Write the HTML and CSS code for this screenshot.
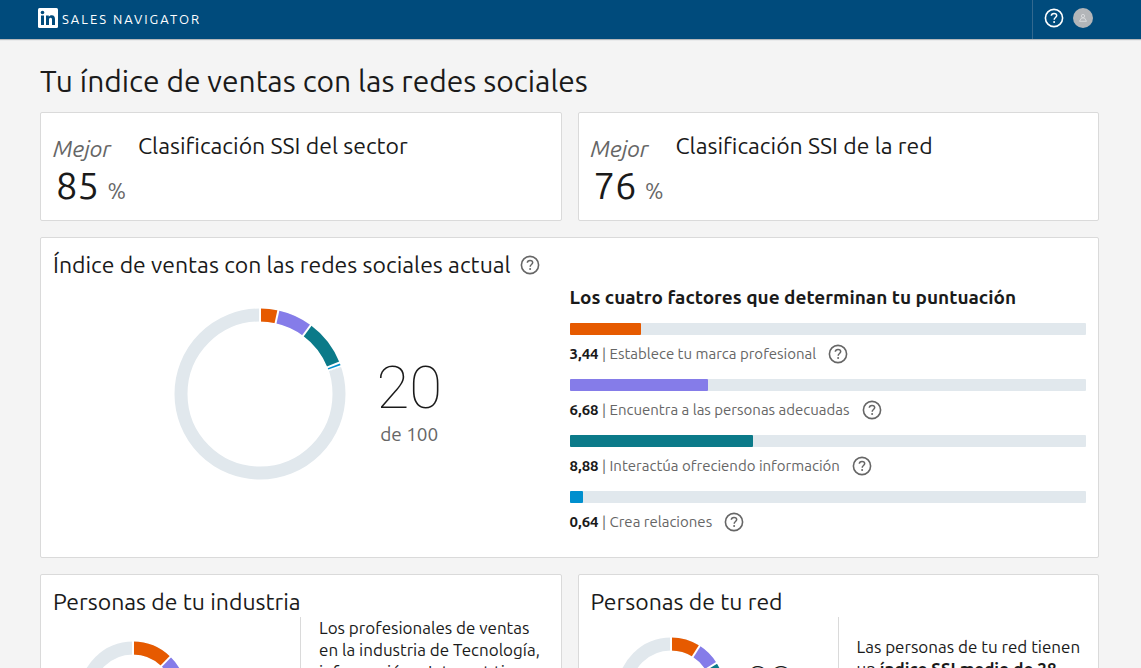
FILE: index.html
```
<!DOCTYPE html>
<html lang="es">
<head>
<meta charset="utf-8">
<meta name="viewport" content="width=device-width, initial-scale=1">
<title>Sales Navigator</title>
<link rel="stylesheet" href="styles.css">
</head>
<body>
<svg class="sprite" aria-hidden="true">
  <symbol id="help" viewBox="0 0 20 20">
    <circle cx="10" cy="10" r="8.600" fill="none" stroke="currentColor" stroke-width="1.600"/>
    <path d="M7.300 7.700C7.400 6.200 8.500 5.400 10 5.400s2.700.9 2.700 2.200c0 1.900-2.500 1.900-2.500 4.100" fill="none" stroke="currentColor" stroke-width="1.500"/>
    <circle cx="10.100" cy="14.100" r="1" fill="currentColor"/>
  </symbol>
</svg>
<header class="topbar">
  <a class="brand" href="#" aria-label="LinkedIn Sales Navigator">
    <svg class="brand-logo" viewBox="0 0 20 20" aria-hidden="true">
      <rect width="20" height="20" rx="1.500" fill="#fff"/>
      <circle cx="4.500" cy="4.500" r="1.800" fill="#004b7c"/>
      <path d="M3 7.500h3V17H3zM8 7.500h2.800v1.300c.5-.9 1.500-1.550 2.900-1.550 2.700 0 3.300 1.800 3.300 4.250V17h-3v-4.900c0-1.200-.1-2.300-1.450-2.300S11 10.900 11 12.100V17H8z" fill="#004b7c"/>
    </svg>
    <span class="brand-name">SALES NAVIGATOR</span>
  </a>
  <div class="tools">
    <button class="tool" type="button" aria-label="Ayuda"><svg class="icon"><use href="#help"/></svg></button>
    <button class="tool" type="button" aria-label="Cuenta">
      <svg class="icon" viewBox="0 0 20 20">
        <circle cx="10" cy="10" r="10" fill="#b3b6b9"/>
        <circle cx="10" cy="8" r="1.600" fill="none" stroke="#d9dbdd"/>
        <path d="M8.500 10h3l2 3.300h-7z" fill="none" stroke="#d9dbdd"/>
      </svg>
    </button>
  </div>
</header>
<main class="page">
  <h1 class="page-title">Tu índice de ventas con las redes sociales</h1>
  <div class="grid">
    <section class="card rank">
      <div class="rank-score">
        <p class="rank-label">Mejor</p>
        <p class="rank-value">85 <span class="rank-unit">%</span></p>
      </div>
      <h2 class="card-title">Clasificación SSI del sector</h2>
    </section>
    <section class="card rank">
      <div class="rank-score">
        <p class="rank-label">Mejor</p>
        <p class="rank-value">76 <span class="rank-unit">%</span></p>
      </div>
      <h2 class="card-title">Clasificación SSI de la red</h2>
    </section>

    <section class="card current">
      <div class="summary">
        <div class="title-row">
          <h2 class="card-title">Índice de ventas con las redes sociales actual</h2>
          <button class="tool" type="button" aria-label="Más información"><svg class="icon"><use href="#help"/></svg></button>
        </div>
        <div class="score">
          <svg class="donut" viewBox="-86 -86 172 172" role="img" aria-label="20 de 100">
            <g class="ring" transform="rotate(-90)">
              <circle class="track" r="79"/>
              <circle class="brand-color" r="79" pathLength="100" stroke-dasharray="3.440 100"/>
              <circle class="people-color" r="79" pathLength="100" stroke-dasharray="6.680 100" stroke-dashoffset="-3.440"/>
              <circle class="insight-color" r="79" pathLength="100" stroke-dasharray="8.880 100" stroke-dashoffset="-10.120"/>
              <circle class="relation-color" r="79" pathLength="100" stroke-dasharray="0.800 100" stroke-dashoffset="-19"/>
            </g>
            <g class="gaps">
              <path d="M0-71V-87"/>
              <path d="M0-71V-87" transform="rotate(12.400)"/>
              <path d="M0-71V-87" transform="rotate(36.400)"/>
              <path d="M0-71V-87" transform="rotate(68.400)"/>
              <path d="M0-71V-87" transform="rotate(71)"/>
            </g>
          </svg>
          <div class="score-text">
            <p class="score-value">20</p>
            <p class="score-total">de 100</p>
          </div>
        </div>
      </div>
      <div class="factors">
        <h3 class="factors-title">Los cuatro factores que determinan tu puntuación</h3>
        <ul class="factor-list">
          <li>
            <div class="bar"><div class="fill brand-fill" style="width:13.76%"></div></div>
            <div class="factor"><p><b>3,44</b> | Establece tu marca profesional</p><button class="tool" type="button" aria-label="Más información"><svg class="icon"><use href="#help"/></svg></button></div>
          </li>
          <li>
            <div class="bar"><div class="fill people-fill" style="width:26.72%"></div></div>
            <div class="factor"><p><b>6,68</b> | Encuentra a las personas adecuadas</p><button class="tool" type="button" aria-label="Más información"><svg class="icon"><use href="#help"/></svg></button></div>
          </li>
          <li>
            <div class="bar"><div class="fill insight-fill" style="width:35.52%"></div></div>
            <div class="factor"><p><b>8,88</b> | Interactúa ofreciendo información</p><button class="tool" type="button" aria-label="Más información"><svg class="icon"><use href="#help"/></svg></button></div>
          </li>
          <li>
            <div class="bar"><div class="fill relation-fill" style="width:2.56%"></div></div>
            <div class="factor"><p><b>0,64</b> | Crea relaciones</p><button class="tool" type="button" aria-label="Más información"><svg class="icon"><use href="#help"/></svg></button></div>
          </li>
        </ul>
      </div>
    </section>

    <section class="card group">
      <h2 class="card-title">Personas de tu industria</h2>
      <div class="group-body">
        <div class="group-score group-score-low">
          <svg class="donut-small" viewBox="-54 -54 108 108" aria-hidden="true">
            <g class="ring" transform="rotate(-90)">
              <circle class="track" r="47"/>
              <circle class="brand-color" r="47" pathLength="100" stroke-dasharray="12.300 100"/>
              <circle class="people-color" r="47" pathLength="100" stroke-dasharray="8 100" stroke-dashoffset="-12.300"/>
            </g>
            <g class="gaps">
              <path d="M0-39V-55"/>
              <path d="M0-39V-55" transform="rotate(44.300)"/>
              <path d="M0-39V-55" transform="rotate(73)"/>
            </g>
          </svg>
        </div>
        <p class="group-text">Los profesionales de ventas<br>en la industria de Tecnología,<br>información e Internet tienen</p>
      </div>
    </section>
    <section class="card group">
      <h2 class="card-title">Personas de tu red</h2>
      <div class="group-body">
        <div class="group-score">
          <svg class="donut-small" viewBox="-54 -54 108 108" aria-hidden="true">
            <g class="ring" transform="rotate(-90)">
              <circle class="track" r="47"/>
              <circle class="brand-color" r="47" pathLength="100" stroke-dasharray="9 100"/>
              <circle class="people-color" r="47" pathLength="100" stroke-dasharray="7.200 100" stroke-dashoffset="-9"/>
              <circle class="insight-color" r="47" pathLength="100" stroke-dasharray="9 100" stroke-dashoffset="-16.200"/>
            </g>
            <g class="gaps">
              <path d="M0-39V-55"/>
              <path d="M0-39V-55" transform="rotate(32.400)"/>
              <path d="M0-39V-55" transform="rotate(58.300)"/>
              <path d="M0-39V-55" transform="rotate(90.700)"/>
            </g>
          </svg>
          <p class="group-value">28</p>
        </div>
        <p class="group-text group-text-low">Las personas de tu red tienen<br>un <b>índice SSI medio de 28</b></p>
      </div>
    </section>
  </div>
</main>
</body>
</html>
```

FILE: styles.css
```
* {
  box-sizing: border-box;
}

body {
  display: flex;
  flex-direction: column;
  height: 100vh;
  margin: 0;
  overflow: hidden;
  background: #f4f4f4;
  color: #1a1a1a;
  font-family: Ubuntu, "Noto Sans", "Open Sans", sans-serif;
  font-size: 16px;
  line-height: 24px;
}

h1,
h2,
h3,
p,
ul {
  margin: 0;
  padding: 0;
  font-weight: 400;
}

.sprite {
  display: none;
}

.topbar {
  display: flex;
  flex: none;
  justify-content: space-between;
  height: 39px;
  padding: 0 48px 0 38px;
  background: #004b7c;
  box-shadow: 0 1px 1px #b4b8bb;
}

.brand {
  display: flex;
  align-items: center;
  gap: 4px;
  padding-bottom: 3px;
  color: #fff;
  text-decoration: none;
}

.brand-logo {
  width: 20px;
  height: 20px;
}

.brand-name {
  padding-top: 2px;
  font-size: 13px;
  letter-spacing: 2px;
}

.tools {
  display: flex;
  align-items: center;
  gap: 9px;
  padding: 0 0 3px 11px;
  border-left: 1px solid #33698f;
  color: #fff;
}

.tool {
  display: flex;
  flex: none;
  padding: 0;
  border: 0;
  background: none;
  color: inherit;
}

.icon {
  width: 20px;
  height: 20px;
}

.page {
  flex: none;
  padding: 22px 42px 16px 40px;
}

.page-title {
  margin-bottom: 11px;
  font-size: 30px;
  line-height: 40px;
}

.grid {
  display: grid;
  grid-template-columns: 1fr 1fr;
  gap: 16px;
}

.card {
  padding: 12px;
  border: 1px solid #dadada;
  border-radius: 2px;
  background: #fff;
}

.card-title {
  font-size: 23px;
  line-height: 30px;
}

.rank {
  display: flex;
  gap: 12px;
  padding: 18px 12px 10px;
}

.rank-score {
  width: 73px;
  padding-top: 6px;
}

.rank-label {
  color: #666;
  font-size: 23px;
  font-style: italic;
  line-height: 24px;
}

.rank-value {
  padding-left: 3px;
  font-size: 38px;
  line-height: 49px;
  white-space: nowrap;
}

.rank-unit {
  color: #666;
  font-size: 22px;
  line-height: 24px;
}

.current {
  display: flex;
  grid-column: 1 / -1;
  padding: 12px 12px 23px;
}

.summary {
  flex: 1;
}

.title-row {
  display: flex;
  align-items: center;
  gap: 9px;
  color: #666;
}

.title-row .card-title {
  color: #1a1a1a;
}

.score {
  display: flex;
  justify-content: center;
  gap: 30px;
  padding: 28px 6px 0 0;
}

.donut {
  width: 172px;
  height: 172px;
}

.ring circle {
  fill: none;
  stroke-width: 13px;
}

.ring .track {
  stroke: #e1e8ed;
}

.ring .brand-color {
  stroke: #e65a00;
}

.ring .people-color {
  stroke: #857ce9;
}

.ring .insight-color {
  stroke: #0b7a89;
}

.ring .relation-color {
  stroke: #008fce;
}

.gaps path {
  stroke: #fff;
  stroke-width: 2px;
}

.score-text {
  padding-top: 46px;
  text-align: center;
}

.score-value {
  font-family: Roboto, "Open Sans", sans-serif;
  font-size: 60px;
  font-weight: 100;
  line-height: 68px;
}

.score-total {
  color: #666;
  font-size: 19px;
}

.factors {
  flex: 1;
  padding-top: 35px;
}

.factors-title {
  margin-bottom: 14px;
  font-size: 19px;
  font-weight: 700;
}

.factor-list {
  display: grid;
  gap: 13px;
  list-style: none;
}

.bar {
  height: 12px;
  border-radius: 1px;
  background: #e1e8ed;
}

.fill {
  height: 100%;
  border-radius: 1px;
}

.brand-fill {
  background: #e65a00;
}

.people-fill {
  background: #857ce9;
}

.insight-fill {
  background: #0b7a89;
}

.relation-fill {
  background: #008fce;
}

.factor {
  display: flex;
  align-items: center;
  gap: 12px;
  padding-top: 7px;
  color: #666;
  font-size: 15px;
}

.factor b {
  color: #1a1a1a;
}

.group-body {
  display: flex;
}

.group-score {
  display: flex;
  flex: none;
  gap: 22px;
  width: 248px;
  height: 160px;
  padding: 20px 0 0 26px;
  border-right: 1px solid #dadada;
}

.group-score-low {
  padding-top: 24px;
}

.donut-small {
  width: 108px;
  height: 108px;
}

.group-value {
  padding-top: 21px;
  font-family: Roboto, "Open Sans", sans-serif;
  font-size: 42px;
  font-weight: 100;
  line-height: 48px;
}

.group-text {
  padding-left: 18px;
  font-size: 17px;
  line-height: 22px;
  white-space: nowrap;
}

.group-text-low {
  padding-top: 19px;
}
```
